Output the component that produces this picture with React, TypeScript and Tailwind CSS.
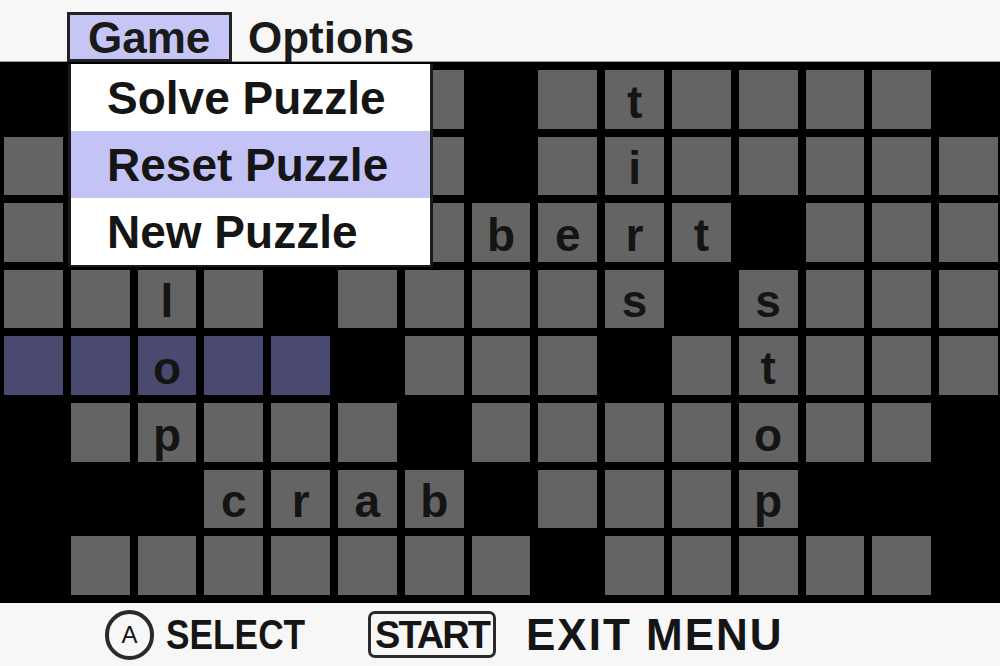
const ROWS = [
  "#......#.t....#",
  ".......#.i.....",
  ".......bert#...",
  "..l.#....s#s...",
  "..o..#...#.t...",
  "#.p...#....o..#",
  "###crab#...p###",
  "#.......#.....#",
];

const MENU = ["Solve Puzzle", "Reset Puzzle", "New Puzzle"];

const font = { fontFamily: '"Liberation Sans", Arial, sans-serif' };

function Cell({ ch, blue }: { ch: string; blue: boolean }) {
  if (ch === "#") return <div />;
  return (
    <div
      className={`flex items-end justify-center pb-[4px] text-[46px] font-bold leading-none text-[#141414] ${
        blue ? "bg-[#4a4a70]" : "bg-[#646464]"
      }`}
    >
      {ch === "." ? "" : ch}
    </div>
  );
}

export default function App() {
  return (
    <div className="flex h-[666px] w-[1000px] flex-col overflow-hidden" style={font}>
      {/* menu bar */}
      <div className="relative flex h-[62px] shrink-0 items-start border-b border-[#9a9a9a] bg-[#f7f7f7] pl-[67px]">
        <div className="mt-[12px] flex h-[50px] w-[165px] items-start border-[3px] border-[#222] bg-[#c6c6f6] pl-[18px] text-[44px] font-bold leading-none text-[#1a1a1a]">
          <span className="mt-[1px]">Game</span>
        </div>
        <span className="ml-[16px] mt-[16px] text-[44px] font-bold leading-none text-[#1a1a1a]">
          Options
        </span>

        {/* dropdown */}
        <div className="absolute left-[68px] top-[64px] z-10 w-[365px] border-x-[3px] border-b-[2px] border-[#1a1a1a] bg-white">
          {MENU.map((item) => (
            <div
              key={item}
              className={`flex h-[67px] items-center pl-[36px] text-[46px] font-bold leading-none text-[#151515] ${
                item === "Reset Puzzle" ? "bg-[#c3c3f6]" : ""
              }`}
            >
              {item}
            </div>
          ))}
        </div>
      </div>

      {/* puzzle grid */}
      <div className="grid h-[541px] shrink-0 grid-cols-[repeat(15,58.8px)] grid-rows-[repeat(8,58.6px)] gap-[8px] bg-black pl-[4px] pt-[8px]">
        {ROWS.map((row, r) =>
          row.split("").map((ch, c) => (
            <Cell key={`${r}-${c}`} ch={ch} blue={r === 4 && c <= 4} />
          ))
        )}
      </div>

      {/* button hints */}
      <div className="flex h-[63px] shrink-0 items-center bg-[#f7f7f7] pl-[105px] text-[#151515]">
        <div className="flex h-[50px] w-[49px] items-center justify-center rounded-full border-[4px] border-[#2a2a2a] text-[24px] leading-none">
          A
        </div>
        <span className="ml-[12px] inline-block w-[140px] origin-left scale-x-[0.84] text-[42px] font-bold leading-none">
          SELECT
        </span>
        <div className="ml-[62px] flex h-[47px] w-[128px] items-center justify-center rounded-[7px] border-[3px] border-[#2a2a2a] text-[38px] font-bold leading-none tracking-[-2px]">
          START
        </div>
        <span className="ml-[30px] text-[44px] font-bold leading-none tracking-[2px]">EXIT MENU</span>
      </div>
    </div>
  );
}
